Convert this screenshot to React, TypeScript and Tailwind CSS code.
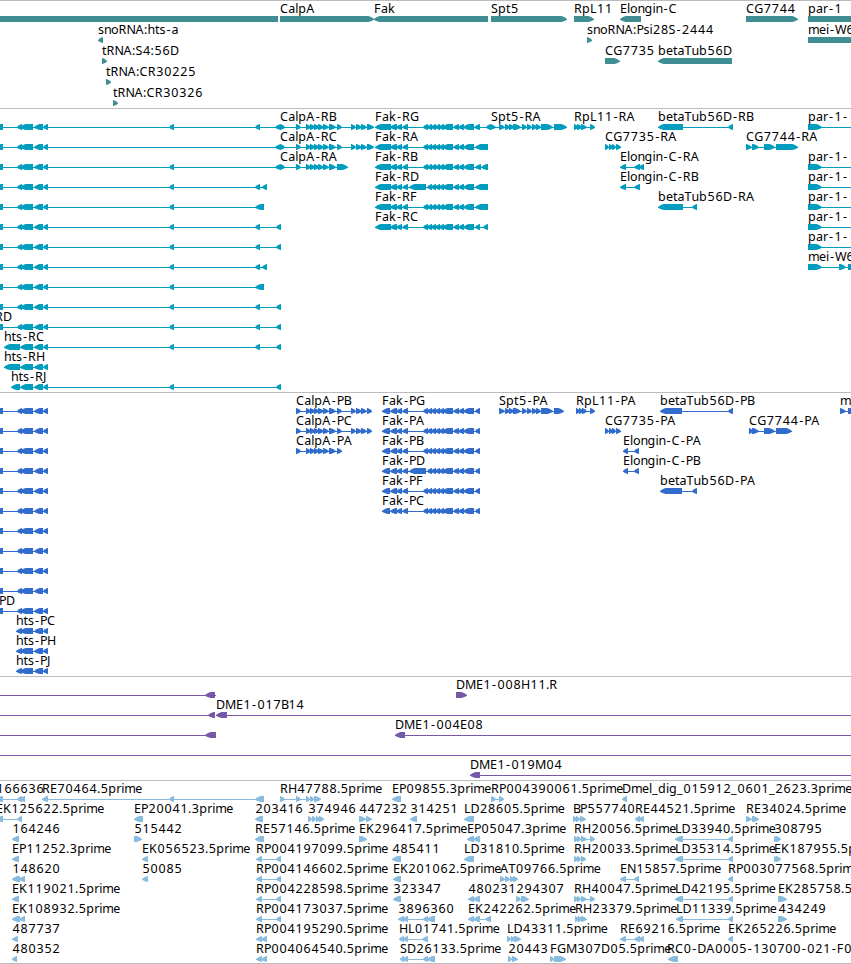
import React from 'react';

type Strand = 'L' | 'R';

interface Feature {
  label: string;
  strand: Strand;
  // flat list of start/end pairs
  exons: number[];
  labelX?: number;
  from?: number;
  to?: number;
}

interface TrackData {
  id: string;
  color: string;
  rowHeight: number;
  className: string;
  rows: Feature[][];
}

const WIDTH = 851;
const TIP = 6;

const L = (label: string, exons: number[], extra: Partial<Feature> = {}): Feature => ({ label, strand: 'L', exons, ...extra });
const R = (label: string, exons: number[], extra: Partial<Feature> = {}): Feature => ({ label, strand: 'R', exons, ...extra });

// Advance of each character in a label, in pixels
const ADVANCE: { [key: string]: number } = {
  A: 8.5, B: 7, C: 8.3, D: 9, E: 7, F: 7, G: 9, H: 9, J: 4, K: 8, L: 6.5, M: 11, N: 9, P: 7, R: 8, S: 7, T: 7, W: 11,
  a: 7, b: 8, d: 8, e: 7, g: 8, h: 7.5, i: 3, k: 7, l: 3, m: 11, n: 7, o: 7.5, p: 8, r: 5, s: 6, t: 4.5, u: 7.5,
  '.': 3.3, ':': 3.5, '-': 6, '_': 6,
};

const glyphPositions = (label: string, start: number) => {
  let x = start;
  return label.split('').map(char => {
    const nudge = char === '-' ? 1 : /\d/.test(char) ? 0.4 : 0;
    const at = x + nudge;
    x += ADVANCE[char] ?? 8;
    return at.toFixed(1);
  }).join(' ');
};

const HTS = [-5, 3, 17, 22, 20, 33, 34, 43, 43, 48];
const HTS_TAIL = [20, 33, 34, 43, 43, 48];
const CALPA_MID = [306, 311, 310, 315, 314, 319, 318, 324, 323, 329, 329, 336];
const CALPA_END = [337, 342, 351, 356, 356, 362, 361, 367];
const FAK_MID = [390, 397, 396, 402, 402, 408];
const FAK_END = [423, 428, 427, 432, 431, 436, 435, 440, 439, 444, 442, 453, 453, 459, 458, 464, 463, 474];
const SPT5 = [499, 505, 505, 510, 509, 514, 513, 521, 522, 527, 527, 532, 532, 537, 536, 541, 541, 553];
const FAK_R = [375, 391, ...FAK_MID];
const FAK_P = [382, 390, ...FAK_MID];
const CG7735 = [605, 609, 609, 613, 612, 616, 616, 621];

const geneRows: Feature[][] = [
  [
    L('', [-20, 278]), R('CalpA', [280, 374]), L('Fak', [374, 488]), R('Spt5', [491, 567]), R('RpL11', [574, 594]),
    L('Elongin-C', [620, 641]), R('CG7744', [746, 798]), R('par-1', [808, 900]),
  ],
  [L('snoRNA:hts-a', [98, 103]), R('snoRNA:Psi28S-2444', [587, 592]), R('mei-W68', [808, 900])],
  [R('tRNA:S4:56D', [102, 107]), R('CG7735', [605, 620]), L('betaTub56D', [658, 732])],
  [R('tRNA:CR30225', [106, 111])],
  [R('tRNA:CR30326', [113, 118])],
];

const transcriptRows: Feature[][] = [
  [
    L('', [...HTS, 169, 174, 255, 260, 275, 281]),
    R('CalpA-RB', [280, 285, 296, 301, ...CALPA_MID, ...CALPA_END, 367, 374]),
    L('Fak-RG', [...FAK_R, ...FAK_END, 474, 480, 486, 491]),
    R('Spt5-RA', [490, 496, ...SPT5, 554, 567], { labelX: 491 }),
    R('RpL11-RA', [574, 578, 577, 582, 581, 587, 590, 595]),
    L('betaTub56D-RB', [658, 683, 728, 733]),
    R('par-1-', [808, 822], { to: 851 }),
  ],
  [
    L('', [...HTS, 275, 281]),
    R('CalpA-RC', [280, 285, 296, 301, ...CALPA_MID, ...CALPA_END, 367, 374]),
    L('Fak-RA', [...FAK_R, ...FAK_END, 475, 488]),
    R('CG7735-RA', CG7735),
    R('CG7744-RA', [746, 752, 752, 759, 764, 775, 776, 798]),
  ],
  [
    L('', [...HTS, 169, 174, 275, 281]),
    R('CalpA-RA', [280, 285, 296, 301, ...CALPA_MID, 337, 348]),
    L('Fak-RB', [...FAK_R, ...FAK_END, 475, 481, 481, 488]),
    L('Elongin-C-RA', [620, 626, 634, 640, 639, 644]),
    R('par-1-', [808, 822], { to: 851 }),
  ],
  [
    L('', [...HTS, 169, 174, 255, 260, 262, 267]),
    L('Fak-RD', [...FAK_R, 409, 426, ...FAK_END.slice(2), 475, 488]),
    L('Elongin-C-RB', [620, 626, 634, 640]),
    R('par-1-', [808, 822], { to: 851 }),
  ],
  [
    L('', [...HTS, 169, 174, 255, 264]),
    L('Fak-RF', [...FAK_R, ...FAK_END, 475, 488]),
    L('betaTub56D-RA', [658, 683, 692, 697]),
    R('par-1-', [808, 822], { to: 851 }),
  ],
  [
    L('', [...HTS, 169, 174, 255, 260, 276, 281]),
    L('Fak-RC', [...FAK_R, ...FAK_END, 475, 480, 483, 488]),
    R('par-1-', [808, 822], { to: 851 }),
  ],
  [L('', [...HTS, 169, 174, 255, 260, 276, 281]), R('par-1-', [808, 822], { to: 851 })],
  [L('', [...HTS, 169, 174, 255, 260, 262, 267]), R('mei-W68', [808, 822, 839, 846, 848, 860])],
  [L('', [...HTS, 169, 174, 255, 264])],
  [L('', [...HTS, 169, 174, 255, 260, 276, 281])],
  [L('hts-RD', [...HTS, 169, 174, 255, 260, 276, 281], { labelX: -29 })],
  [L('hts-RC', [4, 20, ...HTS_TAIL, 169, 174, 255, 260, 276, 281])],
  [L('hts-RH', [4, 20, ...HTS_TAIL])],
  [L('hts-RJ', [11, 20, ...HTS_TAIL, 169, 174, 276, 281])],
];

const proteinRows: Feature[][] = [
  [
    L('', HTS),
    R('CalpA-PB', [296, 301, ...CALPA_MID, ...CALPA_END, 367, 372]),
    L('Fak-PG', [...FAK_P, ...FAK_END, 475, 480]),
    R('Spt5-PA', [...SPT5, 554, 564]),
    R('RpL11-PA', [576, 580, 579, 583, 582, 587, 590, 595]),
    L('betaTub56D-PB', [660, 682, 728, 733]),
    R('mei-W68', [840, 846, 848, 860]),
  ],
  [
    L('', HTS),
    R('CalpA-PC', [296, 301, ...CALPA_MID, ...CALPA_END, 367, 372]),
    L('Fak-PA', [...FAK_P, ...FAK_END, 475, 480]),
    R('CG7735-PA', CG7735),
    R('CG7744-PA', [749, 753, 752, 759, 764, 775, 776, 792]),
  ],
  [
    L('', HTS),
    R('CalpA-PA', [296, 301, ...CALPA_MID, 337, 342]),
    L('Fak-PB', [...FAK_P, ...FAK_END, 475, 480]),
    L('Elongin-C-PA', [623, 628, 634, 639]),
  ],
  [
    L('', HTS),
    L('Fak-PD', [...FAK_P, 409, 426, ...FAK_END.slice(2), 475, 480]),
    L('Elongin-C-PB', [623, 628, 634, 639]),
  ],
  [L('', HTS), L('Fak-PF', [...FAK_P, ...FAK_END, 475, 480]), L('betaTub56D-PA', [660, 682, 692, 697])],
  [L('', HTS), L('Fak-PC', [...FAK_P, ...FAK_END, 475, 480])],
  [L('', HTS)],
  [L('', HTS)],
  [L('', HTS)],
  [L('', HTS)],
  [L('hts-PD', HTS, { labelX: -25 })],
  [L('hts-PC', [16, 22, ...HTS_TAIL])],
  [L('hts-PH', [16, 22, ...HTS_TAIL])],
  [L('hts-PJ', [16, 22, ...HTS_TAIL])],
];

const bacRows: Feature[][] = [
  [L('', [205, 215], { from: 0, to: 216 }), R('DME1-008H11.R', [456, 467])],
  [L('', [208, 215], { from: 0 }), L('DME1-017B14', [216, 227], { to: 851 })],
  [L('', [205, 216], { from: 0 }), L('DME1-004E08', [395, 405], { to: 851 })],
  [L('', [], { from: 0, to: 851 })],
  [L('DME1-019M04', [470, 480], { to: 851 })],
];

const estRows: Feature[][] = [
  [
    L('166636', [-4, 3, 17, 22, 20, 25]), L('RE70464.5prime', [42, 48, 169, 174, 255, 264]),
    R('RH47788.5prime', [280, 285, 296, 301, 306, 310, 310, 314, 314, 321]), L('EP09855.3prime', [392, 401]),
    R('RP004390061.5prime', [491, 496, 499, 504]), L('Dmel_dig_015912_0601_2623.3prime', [622, 627]),
  ],
  [
    L('EK125622.5prime', [-4, 3, 17, 22]), L('EP20041.3prime', [134, 143]), L('203416', [255, 263]),
    R('374946', [308, 312, 312, 316, 316, 320, 319, 324]), R('447232', [359, 366, 366, 372]), L('314251', [410, 417]),
    L('LD28605.5prime', [464, 474]), R('BP557740', [573, 577, 576, 580, 580, 586]), L('RE44521.5prime', [635, 640, 639, 644]),
    R('RE34024.5prime', [746, 752, 752, 759]),
  ],
  [
    L('164246', [12, 19]), R('515442', [134, 142]), L('RE57146.5prime', [255, 264]), R('EK296417.5prime', [359, 367]),
    L('EP05047.3prime', [467, 474, 473, 480]), R('RH20056.5prime', [574, 578, 577, 581, 581, 587, 590, 595]),
    L('LD33940.5prime', [675, 683, 728, 733]), R('308795', [774, 778, 776, 781]),
  ],
  [
    L('EP11252.3prime', [12, 19]), L('EK056523.5prime', [142, 148]), L('RP004197099.5prime', [256, 262, 276, 281]),
    L('485411', [392, 401]), L('LD31810.5prime', [464, 474]), R('RH20033.5prime', [574, 578, 577, 581, 581, 586]),
    L('LD35314.5prime', [675, 683, 728, 733]), R('EK187955.5prime', [774, 778, 776, 781]),
  ],
  [
    L('148620', [12, 20, 19, 25]), L('50085', [142, 148]), L('RP004146602.5prime', [256, 262, 276, 281]),
    L('EK201062.5prime', [393, 401]), R('AT09766.5prime', [500, 505, 505, 510, 510, 514, 513, 518]),
    L('EN15857.5prime', [620, 626, 634, 639]), L('RP003077568.5prime', [728, 733]),
  ],
  [
    L('EK119021.5prime', [12, 19]), L('RP004228598.5prime', [256, 262, 276, 281]), L('323347', [393, 401]),
    L('480231', [468, 474, 473, 480]), R('294307', [516, 521, 521, 529]), R('RH40047.5prime', [574, 578, 577, 581, 581, 587, 590, 595]),
    L('LD42195.5prime', [675, 683, 728, 733]), R('EK285758.5prime', [778, 787]),
  ],
  [
    L('EK108932.5prime', [12, 20, 19, 25]), L('RP004173037.5prime', [256, 262, 276, 281]),
    L('3896360', [398, 404, 402, 408, 423, 428, 427, 435]), L('EK242262.5prime', [468, 474, 473, 480, 485, 491]),
    R('RH23379.5prime', [575, 579, 578, 582, 581, 587]), L('LD11339.5prime', [676, 683, 728, 733]), R('434249', [778, 787]),
  ],
  [
    L('487737', [12, 18]), L('RP004195290.5prime', [256, 262, 261, 267]), L('HL01741.5prime', [399, 404, 403, 408, 422, 428]),
    R('LD43311.5prime', [507, 511, 511, 515, 514, 521]), L('RE69216.5prime', [620, 626, 634, 640, 639, 644]),
    L('EK265226.5prime', [728, 733]),
  ],
  [
    L('480352', [12, 17]), L('RP004064540.5prime', [256, 262, 261, 267]), L('SD26133.5prime', [400, 404, 403, 408, 423, 428, 427, 435]),
    R('20443', [508, 512, 512, 518]), R('FGM307D05.5prime', [550, 554, 554, 566]), L('RC0-DA0005-130700-021-F0', [668, 678], { labelX: 667 }),
  ],
];

const tracks: TrackData[] = [
  { id: 'genes', color: '#408e94', rowHeight: 21, className: 'h-[108px]', rows: geneRows },
  { id: 'transcripts', color: '#009dbf', rowHeight: 20, className: 'h-[284px]', rows: transcriptRows },
  { id: 'proteins', color: '#316ccc', rowHeight: 20, className: 'h-[284px]', rows: proteinRows },
  { id: 'bacs', color: '#7558a8', rowHeight: 20, className: 'h-[104px]', rows: bacRows },
  { id: 'ests', color: '#88bbdd', rowHeight: 20, className: 'h-[183px]', rows: estRows },
];

// Box with a slightly rounded arrow head on the strand's side
const exonPoints = (start: number, end: number, strand: Strand) => {
  const tip = Math.min(TIP, end - start) - 0.5;
  const [head, back, dir] = strand === 'L' ? [start, end, 1] : [end, start, -1];
  const mid = head + dir * tip * 0.45;
  const neck = head + dir * tip;
  return `${head},15.9 ${mid},14.2 ${neck},13 ${back},13 ${back},19 ${neck},19 ${mid},18 ${head},16.8`;
};

const FeatureGlyph: React.FC<{ feature: Feature; color: string }> = ({ feature, color }) => {
  const { label, strand, exons } = feature;
  const from = feature.from ?? exons[0];
  const to = feature.to ?? exons[exons.length - 1];
  const labelX = feature.labelX ?? exons[0];

  return (
    <g>
      <rect x={from} y={16} width={to - from} height={1} fill={color} shapeRendering="crispEdges" />
      {exons.map((start, i) => (i % 2 === 0 ? (
        <polygon key={i} points={exonPoints(start, exons[i + 1], strand)} fill={color} />
      ) : null))}
      {label && <text x={glyphPositions(label, labelX)} y={10} fill="#000">{label}</text>}
    </g>
  );
};

const Track: React.FC<{ track: TrackData }> = ({ track }) => (
  <section className={`flex flex-col shrink-0 border-t border-[#bbbbbb] pt-0.5 ${track.className}`}>
    {track.rows.map((row, i) => (
      <svg
        key={i}
        width={WIDTH}
        height={track.rowHeight}
        className="block shrink-0 overflow-visible font-['Noto_Sans',sans-serif] text-[12.5px]"
      >
        {row.map((feature, j) => <FeatureGlyph key={j} feature={feature} color={track.color} />)}
      </svg>
    ))}
  </section>
);

export default function App() {
  return (
    <main className="flex flex-col w-[851px] h-[964px] overflow-hidden bg-white border-b border-[#bbbbbb]">
      {tracks.map(track => <Track key={track.id} track={track} />)}
    </main>
  );
}
